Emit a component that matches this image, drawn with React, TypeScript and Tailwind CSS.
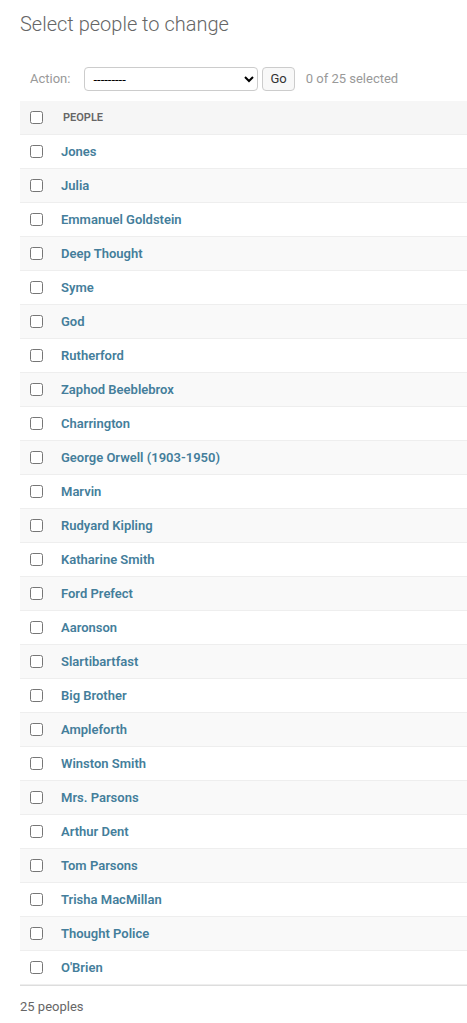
const people = [
  'Jones',
  'Julia',
  'Emmanuel Goldstein',
  'Deep Thought',
  'Syme',
  'God',
  'Rutherford',
  'Zaphod Beeblebrox',
  'Charrington',
  'George Orwell (1903-1950)',
  'Marvin',
  'Rudyard Kipling',
  'Katharine Smith',
  'Ford Prefect',
  'Aaronson',
  'Slartibartfast',
  'Big Brother',
  'Ampleforth',
  'Winston Smith',
  'Mrs. Parsons',
  'Arthur Dent',
  'Tom Parsons',
  'Trisha MacMillan',
  'Thought Police',
  "O'Brien",
];

function Check() {
  return <input type="checkbox" className="m-0 h-[13px] w-[13px] shrink-0" />;
}

export default function App() {
  return (
    <div className="min-h-screen bg-white pl-5 font-['Roboto','Liberation_Sans',sans-serif] text-[13px] text-[#333]">
      <h1 className="pt-[10px] text-[20px] leading-[28px] font-light text-[#666]">Select people to change</h1>

      <div className="mt-[29px] flex h-[24px] items-center pl-[10px]">
        <span className="text-[13px] text-[#999]">Action:</span>
        <select className="ml-[14px] h-[24px] w-[174px] rounded-[4px] border border-[#ccc] bg-white pl-[4px] text-[13px] text-black">
          <option>---------</option>
        </select>
        <button className="ml-[4px] h-[24px] rounded-[4px] border border-[#ccc] bg-[#f8f8f8] px-[7px] text-[13px] text-[#333]">
          Go
        </button>
        <span className="ml-[11px] text-[13px] text-[#999]">0 of 25 selected</span>
      </div>

      <div className="mt-[10px]">
        <div className="flex h-[34px] items-center border-b border-[#eee] bg-[#f6f6f6] pl-[10px]">
          <Check />
          <span className="ml-[20px] pt-[1px] text-[11px] font-semibold uppercase text-[#666]">People</span>
        </div>
        {people.map((name, i) => (
          <div
            key={name}
            className={
              i % 2 === 0
                ? 'flex h-[34px] items-center border-b border-[#eee] bg-white pl-[10px]'
                : 'flex h-[34px] items-center border-b border-[#eee] bg-[#f9f9f9] pl-[10px]'
            }
          >
            <Check />
            <a href="#" className="ml-[18px] font-semibold text-[#447e9b]">
              {name}
            </a>
          </div>
        ))}
        <div className="border-t border-[#ddd] py-[10px] leading-[22px] text-[#666]">25 peoples</div>
      </div>
    </div>
  );
}
